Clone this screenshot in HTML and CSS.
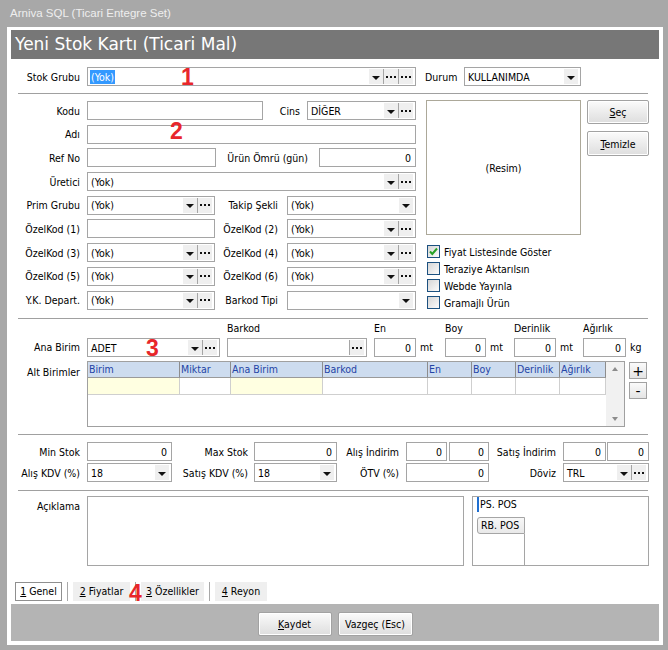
FILE: index.html
```html
<!DOCTYPE html>
<html lang="tr">
<head>
    <meta charset="UTF-8">
    <title>Arniva SQL - Yeni Stok Kartı</title>
    <link rel="stylesheet" href="styles.css">
</head>
<body>
    <div class="titlebar">Arniva SQL (Ticari Entegre Set)</div>

    <div class="panel">
        <div class="header">Yeni Stok Kartı (Ticari Mal)</div>

        <!-- Stok grubu / durum -->
        <div class="row top-row">
            <span class="lbl">Stok Grubu</span>
            <div class="box combo w329"><span class="val"><span class="sel">(Yok)</span></span><i class="dd"></i><i class="dots"></i><i class="dots"></i></div>
            <span class="lbl-durum">Durum</span>
            <div class="box combo w117"><span class="val">KULLANIMDA</span><i class="dd"></i></div>
        </div>
        <div class="sep"></div>

        <!-- Genel bilgiler -->
        <div class="main">
            <div class="fields">
                <div class="row">
                    <span class="lbl">Kodu</span>
                    <div class="box w176"></div>
                    <span class="lbl-cins">Cins</span>
                    <div class="box combo w109"><span class="val">DİĞER</span><i class="dd"></i><i class="dots"></i></div>
                </div>
                <div class="row">
                    <span class="lbl">Adı</span>
                    <div class="box w329"></div>
                </div>
                <div class="row">
                    <span class="lbl">Ref No</span>
                    <div class="box w129"></div>
                    <span class="lbl-omur">Ürün Ömrü (gün)</span>
                    <div class="box num w97">0</div>
                </div>
                <div class="row">
                    <span class="lbl">Üretici</span>
                    <div class="box combo w329"><span class="val">(Yok)</span><i class="dd"></i><i class="dots"></i></div>
                </div>
                <div class="row">
                    <span class="lbl">Prim Grubu</span>
                    <div class="box combo w128"><span class="val">(Yok)</span><i class="dd"></i><i class="dots"></i></div>
                    <span class="lbl-mid">Takip Şekli</span>
                    <div class="box combo w129"><span class="val">(Yok)</span><i class="dd"></i></div>
                </div>
                <div class="row">
                    <span class="lbl">ÖzelKod (1)</span>
                    <div class="box w128"></div>
                    <span class="lbl-mid">ÖzelKod (2)</span>
                    <div class="box combo w129"><span class="val">(Yok)</span><i class="dd"></i><i class="dots"></i></div>
                </div>
                <div class="row">
                    <span class="lbl">ÖzelKod (3)</span>
                    <div class="box combo w128"><span class="val">(Yok)</span><i class="dd"></i><i class="dots"></i></div>
                    <span class="lbl-mid">ÖzelKod (4)</span>
                    <div class="box combo w129"><span class="val">(Yok)</span><i class="dd"></i><i class="dots"></i></div>
                </div>
                <div class="row">
                    <span class="lbl">ÖzelKod (5)</span>
                    <div class="box combo w128"><span class="val">(Yok)</span><i class="dd"></i><i class="dots"></i></div>
                    <span class="lbl-mid">ÖzelKod (6)</span>
                    <div class="box combo w129"><span class="val">(Yok)</span><i class="dd"></i><i class="dots"></i></div>
                </div>
                <div class="row">
                    <span class="lbl">Y.K. Depart.</span>
                    <div class="box combo w128"><span class="val">(Yok)</span><i class="dd"></i><i class="dots"></i></div>
                    <span class="lbl-mid">Barkod Tipi</span>
                    <div class="box combo w129"><span class="val"></span><i class="dd"></i></div>
                </div>
            </div>

            <div class="side">
                <div class="pic-row">
                    <div class="pic">(Resim)</div>
                    <div class="pic-btns">
                        <button class="btn btn-sec"><u>S</u>eç</button>
                        <button class="btn btn-tem"><u>T</u>emizle</button>
                    </div>
                </div>
                <div class="checks">
                    <div class="chk"><i class="cbox"><svg width="11" height="11" viewBox="0 0 11 11"><path d="M2 5.5 L4.3 8 L9 2.5" fill="none" stroke="#27a127" stroke-width="2"/></svg></i>Fiyat Listesinde Göster</div>
                    <div class="chk"><i class="cbox"></i>Teraziye Aktarılsın</div>
                    <div class="chk"><i class="cbox"></i>Webde Yayınla</div>
                    <div class="chk"><i class="cbox"></i>Gramajlı Ürün</div>
                </div>
            </div>
        </div>
        <div class="sep"></div>

        <!-- Birimler -->
        <div class="unit-row">
            <span class="lbl">Ana Birim</span>
            <div class="box combo w133"><span class="val">ADET</span><i class="dd"></i><i class="dots"></i></div>
            <div class="fld fld-barkod">
                <span class="cap">Barkod</span>
                <div class="box combo w140"><span class="val"></span><i class="dots"></i></div>
            </div>
            <div class="fld"><span class="cap">En</span><div class="box num w42">0</div></div>
            <span class="unit u29">mt</span>
            <div class="fld"><span class="cap">Boy</span><div class="box num w41">0</div></div>
            <span class="unit u28">mt</span>
            <div class="fld"><span class="cap">Derinlik</span><div class="box num w42">0</div></div>
            <span class="unit u27">mt</span>
            <div class="fld"><span class="cap">Ağırlık</span><div class="box num w43">0</div></div>
            <span class="unit">kg</span>
        </div>

        <div class="grid-row">
            <span class="lbl lbl-alt">Alt Birimler</span>
            <div class="grid">
                <div class="gcols">
                    <span class="gh">Birim</span>
                    <span class="gh">Miktar</span>
                    <span class="gh">Ana Birim</span>
                    <span class="gh">Barkod</span>
                    <span class="gh">En</span>
                    <span class="gh">Boy</span>
                    <span class="gh">Derinlik</span>
                    <span class="gh">Ağırlık</span>
                    <span class="gc yel"></span>
                    <span class="gc"></span>
                    <span class="gc yel"></span>
                    <span class="gc"></span>
                    <span class="gc"></span>
                    <span class="gc"></span>
                    <span class="gc"></span>
                    <span class="gc"></span>
                </div>
                <div class="vscroll"><i class="up"></i><i class="down"></i></div>
            </div>
            <div class="pm">
                <button class="pmb">+</button>
                <button class="pmb">-</button>
            </div>
        </div>
        <div class="sep"></div>

        <!-- Stok / KDV -->
        <div class="stock">
            <div class="row">
                <span class="lbl">Min Stok</span>
                <div class="box num w85">0</div>
                <span class="ls ls-a">Max Stok</span>
                <div class="box num w83">0</div>
                <span class="ls ls-b">Alış İndirim</span>
                <div class="box num w41">0</div>
                <div class="box num w40 ml2">0</div>
                <span class="ls ls-c">Satış İndirim</span>
                <div class="box num w43">0</div>
                <div class="box num w42 ml1">0</div>
            </div>
            <div class="row">
                <span class="lbl">Alış KDV (%)</span>
                <div class="box combo w85"><span class="val">18</span><i class="dd"></i></div>
                <span class="ls ls-a">Satış KDV (%)</span>
                <div class="box combo w83"><span class="val">18</span><i class="dd"></i></div>
                <span class="ls ls-b">ÖTV (%)</span>
                <div class="box num w83">0</div>
                <span class="ls ls-c">Döviz</span>
                <div class="box combo w86"><span class="val">TRL</span><i class="dd"></i><i class="dots"></i></div>
            </div>
        </div>
        <div class="sep"></div>

        <!-- Açıklama -->
        <div class="notes">
            <span class="lbl lbl-not">Açıklama</span>
            <div class="memo"></div>
            <div class="posbox">
                <div class="postab active">PS. POS</div>
                <div class="pos-rest">
                    <div class="postab">RB. POS</div>
                    <div class="pos-line"></div>
                </div>
            </div>
        </div>

        <div class="tabs">
            <span class="tab active t1"><u>1</u> Genel</span>
            <i class="tsep"></i>
            <span class="tab t2"><u>2</u> Fiyatlar</span>
            <i class="tsep"></i>
            <span class="tab t3"><u>3</u> Özellikler</span>
            <i class="tsep"></i>
            <span class="tab t4"><u>4</u> Reyon</span>
        </div>

        <div class="buttonbar">
            <button class="btn btn-kaydet"><u>K</u>aydet</button>
            <button class="btn btn-vazgec">Vazgeç (Esc)</button>
        </div>
    </div>

    <!-- annotation numbers -->
    <span class="mark m1">1</span>
    <span class="mark m2">2</span>
    <span class="mark m3">3</span>
    <span class="mark m4">4</span>
</body>
</html>
```

FILE: styles.css
```css
body {
    margin: 0;
    width: 668px;
    height: 650px;
    overflow: hidden;
    position: relative;
    background-color: #a8a8a8;
    font-family: "DejaVu Sans Condensed", "DejaVu Sans", sans-serif;
    font-stretch: condensed;
    font-size: 10.5px;
    color: #000;
}
button {
    font: inherit;
    color: #000;
    padding: 0;
}
.titlebar {
    height: 27px;
    line-height: 26px;
    padding-left: 10px;
    font-family: "Liberation Sans", Arial, sans-serif;
    font-stretch: normal;
    font-size: 11.5px;
    color: #eeeeee;
}
.panel {
    margin-left: 7px;
    width: 648px;
    padding: 3px 4px 4px;
    background-color: #fff;
}
.header {
    height: 29px;
    line-height: 29px;
    padding-left: 4px;
    background-color: #777;
    color: #fff;
    font-family: "DejaVu Sans", sans-serif;
    font-stretch: normal;
    font-size: 17px;
}

/* generic rows and inputs */
.row {
    display: flex;
    align-items: center;
    height: 19px;
}
.lbl {
    flex: none;
    width: 69px;
    margin-right: 7px;
    text-align: right;
    white-space: nowrap;
}
.box {
    flex: none;
    box-sizing: border-box;
    height: 19px;
    display: flex;
    align-items: center;
    padding: 0 2px 0 3px;
    border: 1px solid #a5a5a5;
    background-color: #fff;
    white-space: nowrap;
    overflow: hidden;
}
.box .val {
    flex: 1;
}
.num {
    justify-content: flex-end;
    padding-right: 4px;
}
.sel {
    display: inline-block;
    margin-left: -1px;
    padding: 0 1px;
    line-height: 14px;
    background-color: #3399ff;
    color: #fff;
}
.dd, .dots {
    flex: none;
    width: 14px;
    height: 15px;
    display: flex;
    align-items: center;
    justify-content: center;
    background-color: #efefef;
}
.dd::after {
    content: "";
    margin-top: 2px;
    border-left: 4px solid transparent;
    border-right: 4px solid transparent;
    border-top: 4px solid #111;
}
.dots {
    border-left: 1px solid #a5a5a5;
}
.dots::after {
    content: "";
    width: 2px;
    height: 2px;
    margin-right: 8px;
    background-color: #111;
    box-shadow: 4px 0 #111, 8px 0 #111;
}
.w40 { width: 40px; }
.w41 { width: 41px; }
.w42 { width: 42px; }
.w43 { width: 43px; }
.w83 { width: 83px; }
.w85 { width: 85px; }
.w86 { width: 86px; }
.w97 { width: 97px; }
.w109 { width: 109px; }
.w117 { width: 117px; }
.w128 { width: 128px; }
.w129 { width: 129px; }
.w133 { width: 133px; }
.w140 { width: 140px; }
.w176 { width: 176px; }
.w329 { width: 329px; }
.ml1 { margin-left: 1px; }
.ml2 { margin-left: 2px; }

.sep {
    height: 1px;
    margin: 7px 11px 0 7px;
    background-color: #a0a0a0;
}

/* top row */
.top-row {
    margin-top: 8px;
}
.lbl-durum {
    width: 32px;
    margin: 0 7px 0 9px;
}

/* main block */
.main {
    display: flex;
    gap: 10px;
    margin-top: 6px;
}
.fields {
    width: 405px;
    display: flex;
    flex-direction: column;
    gap: 4.7px;
    padding-top: 1px;
}
.lbl-cins, .lbl-omur, .lbl-mid {
    flex: none;
    text-align: right;
    white-space: nowrap;
}
.lbl-cins {
    width: 37px;
    margin-right: 7px;
}
.lbl-omur {
    width: 92px;
    margin-right: 11px;
}
.lbl-mid {
    width: 63px;
    margin-right: 9px;
}
.side {
    width: 223px;
}
.pic-row {
    display: flex;
    gap: 6px;
}
.pic {
    width: 155px;
    height: 135px;
    box-sizing: border-box;
    border: 1px solid #aca899;
    display: flex;
    align-items: center;
    justify-content: center;
}
.pic-btns {
    display: flex;
    flex-direction: column;
    gap: 7px;
}
.btn {
    box-sizing: border-box;
    border: 1px solid #a2a2a2;
    border-radius: 2px;
    background: linear-gradient(#fbfbfb, #ececec 50%, #dedede);
    box-shadow: inset 0 0 0 1px #fff;
}
.btn-sec { width: 62px; height: 24px; }
.btn-tem { width: 62px; height: 25px; }
.checks {
    margin-top: 8px;
}
.chk {
    display: flex;
    align-items: center;
    height: 17px;
    padding-left: 1px;
}
.cbox {
    width: 13px;
    height: 13px;
    box-sizing: border-box;
    margin-right: 4px;
    border: 1px solid #1c5180;
    background: linear-gradient(135deg, #d6d6d6, #fbfbfb);
}
.cbox svg {
    display: block;
}

/* units */
.unit-row {
    display: flex;
    align-items: flex-end;
    margin-top: 3px;
}
.unit-row .lbl {
    line-height: 19px;
}
.fld {
    display: flex;
    flex-direction: column;
}
.fld-barkod {
    margin-left: 7px;
    margin-right: 7px;
}
.cap {
    line-height: 13px;
    margin-bottom: 3px;
}
.unit {
    line-height: 19px;
    padding-left: 4px;
    box-sizing: border-box;
}
.u27 { width: 27px; }
.u28 { width: 28px; }
.u29 { width: 29px; }

.grid-row {
    display: flex;
    align-items: flex-start;
    margin-top: 4px;
}
.lbl-alt {
    padding-top: 2px;
    line-height: 19px;
}
.grid {
    width: 538px;
    height: 66px;
    box-sizing: border-box;
    display: flex;
    border: 1px solid #a0a0a0;
}
.gcols {
    width: 518px;
    display: grid;
    grid-template-columns: 92px 51px 92px 105px 44px 44px 44px 46px;
    grid-template-rows: 16px 17px;
    align-content: start;
}
.gh {
    box-sizing: border-box;
    padding-left: 1px;
    line-height: 15px;
    border-right: 1px solid #8d8d8d;
    border-bottom: 1px solid #9a9a9a;
    background-color: #cddcef;
    color: #2444a6;
    white-space: nowrap;
    overflow: hidden;
}
.gc {
    box-sizing: border-box;
    border-right: 1px solid #cfcfcf;
    border-bottom: 1px solid #cfcfcf;
}
.gc.yel {
    background-color: #ffffe1;
}
.vscroll {
    width: 18px;
    display: flex;
    flex-direction: column;
    align-items: center;
    justify-content: space-between;
    padding: 5px 0 5px;
    box-sizing: border-box;
    background-color: #f1f1f1;
}
.up {
    border-left: 3px solid transparent;
    border-right: 3px solid transparent;
    border-bottom: 4px solid #8c8c8c;
}
.down {
    border-left: 3px solid transparent;
    border-right: 3px solid transparent;
    border-top: 4px solid #8c8c8c;
}
.pm {
    display: flex;
    flex-direction: column;
    gap: 3px;
    margin-left: 4px;
    padding-top: 1px;
}
.pmb {
    width: 18px;
    height: 17px;
    box-sizing: border-box;
    border: 1px solid #a2a2a2;
    background: linear-gradient(#fbfbfb, #e4e4e4);
    font-family: "DejaVu Sans", sans-serif;
    font-stretch: normal;
    font-size: 14px;
    line-height: 14px;
}

/* stock */
.stock {
    display: flex;
    flex-direction: column;
    gap: 2px;
    margin-top: 7px;
}
.ls {
    flex: none;
    text-align: right;
    white-space: nowrap;
}
.ls-a { width: 76px; margin-right: 6px; }
.ls-b { width: 62px; margin-right: 7px; }
.ls-c { width: 67px; margin-right: 7px; }
.stock + .sep {
    margin-top: 8px;
}

/* notes */
.notes {
    display: flex;
    height: 70px;
    margin-top: 5px;
}
.lbl-not {
    padding-top: 1px;
    line-height: 19px;
}
.memo {
    width: 377px;
    box-sizing: border-box;
    border: 1px solid #a5a5a5;
}
.posbox {
    width: 177px;
    margin-left: 8px;
    box-sizing: border-box;
    display: flex;
    flex-direction: column;
    padding-left: 4px;
    border: 1px solid #a5a5a5;
}
.postab {
    height: 15px;
    line-height: 15px;
    white-space: nowrap;
}
.postab.active {
    width: 44px;
    padding-left: 1px;
    border-left: 2px solid #1f6fd1;
}
.pos-rest {
    flex: 1;
    display: flex;
    flex-direction: column;
    margin-top: 5px;
}
.pos-rest .postab {
    width: 48px;
    height: 17px;
    box-sizing: border-box;
    padding-left: 3px;
    border: 1px solid #a5a5a5;
    border-radius: 3px 0 0 3px;
    background: linear-gradient(#f7f7f7, #e9e9e9);
}
.pos-line {
    flex: 1;
    width: 0;
    margin-left: 47px;
    border-left: 1px solid #a5a5a5;
}

/* page tabs */
.tabs {
    display: flex;
    height: 19px;
    margin-top: 16px;
    padding-left: 4px;
}
.tab {
    box-sizing: border-box;
    line-height: 19px;
    text-align: center;
    background-color: #efefef;
    white-space: nowrap;
}
.tab.active {
    line-height: 17px;
    border: 1px solid #8f8f8f;
    background-color: #fff;
}
.t1 { width: 47px; }
.t2 { width: 57px; }
.t3 { width: 63px; }
.t4 { width: 52px; }
.tsep {
    width: 1px;
    margin: 0 5px;
    background-color: #a8a8a8;
}

.buttonbar {
    display: flex;
    justify-content: center;
    gap: 6px;
    height: 37px;
    box-sizing: border-box;
    margin-top: 3px;
    padding-top: 8px;
    background-color: #b4b4b4;
}
.btn-kaydet { width: 74px; height: 24px; }
.btn-vazgec { width: 75px; height: 24px; }

/* red annotation numbers */
.mark {
    position: absolute;
    font-family: "Liberation Sans", Arial, sans-serif;
    font-stretch: normal;
    font-weight: bold;
    font-size: 23px;
    line-height: 23px;
    color: #e8262b;
}
.m1 { left: 181px; top: 66px; }
.m2 { left: 170px; top: 120px; }
.m3 { left: 146px; top: 337px; }
.m4 { left: 129px; top: 582px; }
```
